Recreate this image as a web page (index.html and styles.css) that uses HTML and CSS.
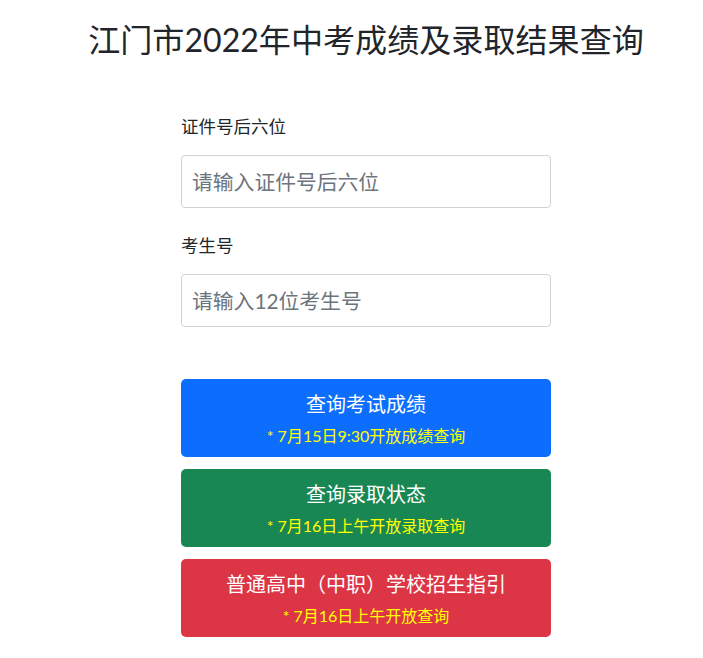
FILE: index.html
```html
<!DOCTYPE html>
<html lang="zh-CN">
<head>
    <meta charset="UTF-8">
    <meta name="viewport" content="width=device-width, initial-scale=1.0">
    <title>江门市2022年中考成绩及录取结果查询</title>
    <link rel="stylesheet" href="styles.css">
</head>
<body>
    <div class="page">
        <h1 class="title">江门市2022年中考成绩及录取结果查询</h1>

        <form class="query-form" onsubmit="return false;">
            <div class="field">
                <label class="form-label" for="idcard">证件号后六位</label>
                <input class="form-control" id="idcard" type="text" placeholder="请输入证件号后六位">
            </div>
            <div class="field">
                <label class="form-label" for="examno">考生号</label>
                <input class="form-control" id="examno" type="text" placeholder="请输入12位考生号">
            </div>

            <div class="actions">
                <button class="btn btn-primary" type="button">
                    <span class="btn-title">查询考试成绩</span>
                    <span class="btn-note">* 7月15日9:30开放成绩查询</span>
                </button>
                <button class="btn btn-success" type="button">
                    <span class="btn-title">查询录取状态</span>
                    <span class="btn-note">* 7月16日上午开放录取查询</span>
                </button>
                <button class="btn btn-danger" type="button">
                    <span class="btn-title">普通高中（中职）学校招生指引</span>
                    <span class="btn-note">* 7月16日上午开放查询</span>
                </button>
            </div>
        </form>
    </div>
</body>
</html>
```

FILE: styles.css
```css
* { margin: 0; padding: 0; box-sizing: border-box; }
body { font-family: Lato, "Noto Sans CJK SC", sans-serif; color: #212529; background: #fff; }
.page { padding: 20px 0 0 29px; }
.title { font-size: 32.1px; font-weight: 400; line-height: 40px; text-align: center; color: #212529; }
.query-form { width: 370px; margin: 54px auto 0; }
.field { margin-bottom: 25px; }
.form-label { display: block; font-size: 17.5px; line-height: 26px; margin-bottom: 15px; }
.form-control { display: block; width: 100%; height: 53px; padding: 10px 10px; font-family: inherit; font-size: 20.8px; line-height: 31px; color: #212529; background: #fff; border: 1px solid #ced4da; border-radius: 4px; outline: none; }
.form-control::placeholder { color: #6c757d; opacity: 1; }
.actions { display: flex; flex-direction: column; gap: 12px; margin-top: 52px; }
.btn { display: flex; flex-direction: column; align-items: center; width: 100%; height: 78px; padding: 10px 12px 9px; border: none; border-radius: 5px; font-family: inherit; color: #fff; cursor: pointer; }
.btn-title { display: block; font-size: 20px; line-height: 30px; }
.btn-note { display: block; font-size: 16px; line-height: 24px; margin-top: 5px; color: #ffff00; }
.btn-primary { background: #0d6efd; }
.btn-success { background: #198754; }
.btn-danger { background: #dc3545; }
```
